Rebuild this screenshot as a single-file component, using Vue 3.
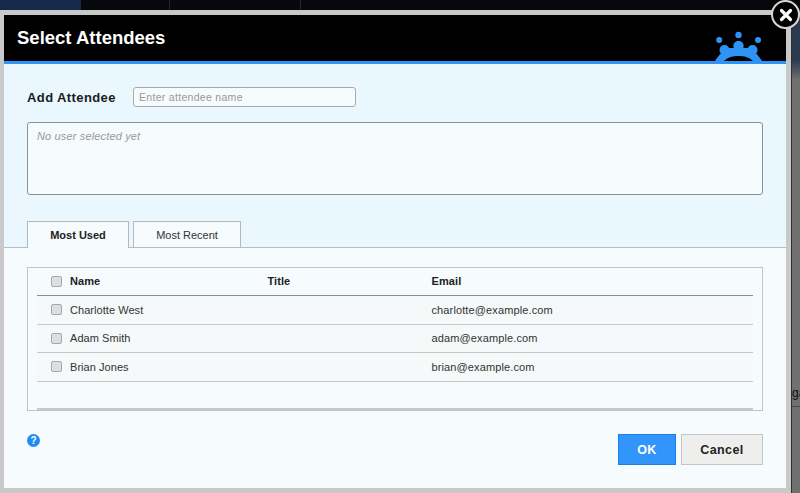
<script setup>
const rows = [
  { name: 'Charlotte West', email: 'charlotte@example.com' },
  { name: 'Adam Smith', email: 'adam@example.com' },
  { name: 'Brian Jones', email: 'brian@example.com' },
]
</script>

<template>
  <div class="page">
    <div class="topstrip">
      <i class="navy"></i>
      <i class="seg"></i>
      <i class="seg"></i>
    </div>
    <div class="sidetext">ga</div>
    <div class="sideline"></div>
    <div class="modal">
      <header class="head">
        <h1>Select Attendees</h1>
        <svg class="logo" width="48" height="30" viewBox="0 0 48 30">
          <g fill="#2f93f5">
            <circle cx="23.5" cy="4" r="3.2" />
            <circle cx="4.2" cy="9" r="3" />
            <circle cx="43" cy="9" r="3" />
            <circle cx="23.5" cy="15" r="5.2" />
            <circle cx="9.5" cy="19" r="5" />
            <circle cx="37.5" cy="19" r="5" />
            <path d="M0 30 C4 24 8 19 14 17 L33 17 C39 19 43 24 47 30 H38 C34 26 29 25 23.5 25 C18 25 13 26 9 30 Z" />
          </g>
        </svg>
      </header>

      <section class="upper">
        <div class="add-row">
          <label>Add Attendee</label>
          <div class="input">Enter attendee name</div>
        </div>
        <div class="selected">No user selected yet</div>
        <div class="tabs">
          <div class="tab active">Most Used</div>
          <div class="tab">Most Recent</div>
        </div>
      </section>

      <section class="lower">
        <div class="tablebox">
          <div class="row header">
            <span class="check"></span>
            <span class="name">Name</span>
            <span class="title">Title</span>
            <span class="email">Email</span>
          </div>
          <div v-for="r in rows" :key="r.email" class="row item">
            <span class="check"></span>
            <span class="name">{{ r.name }}</span>
            <span class="title"></span>
            <span class="email">{{ r.email }}</span>
          </div>
          <div class="tail"></div>
        </div>
        <div class="foot">
          <span class="help">?</span>
          <div class="buttons">
            <button class="ok">OK</button>
            <button class="cancel">Cancel</button>
          </div>
        </div>
      </section>
    </div>
    <div class="close">
      <svg width="16" height="16" viewBox="0 0 16 16">
        <path d="M3.5 3.5 L12.5 12.5 M12.5 3.5 L3.5 12.5" stroke="#fff" stroke-width="3.2" stroke-linecap="round" />
      </svg>
    </div>
  </div>
</template>

<style>
html, body { margin: 0; padding: 0; background: #6c6c6c; }
</style>

<style scoped>
.page {
  position: relative;
  width: 800px;
  height: 493px;
  overflow: hidden;
  background: linear-gradient(#2c3a50 0, #2c3a50 60px, #707070 80px);
  font-family: "Liberation Sans", Arial, sans-serif;
  color: #222;
}
.topstrip {
  height: 10px;
  background: #06080c;
  display: flex;
}
.navy {
  display: block;
  width: 81px;
  background: #16294a;
}
.seg {
  display: block;
  width: 88px;
  border-right: 1px solid #23262b;
}
.seg + .seg { width: 130px; }
.sidetext {
  position: absolute;
  left: 792px;
  top: 386px;
  font-size: 12px;
  color: #111;
}
.sideline {
  position: absolute;
  left: 792px;
  top: 406px;
  width: 8px;
  height: 1px;
  background: #4c4c4c;
}
.modal {
  width: 782px;
  height: 473px;
  border: 4px solid #c9c9c9;
  border-top-width: 5px;
  border-bottom-width: 5px;
  border-right-width: 5px;
  box-shadow: 1px 0 0 #2f2f2f;
  display: flex;
  flex-direction: column;
}
.head {
  height: 46px;
  background: #000;
  border-bottom: 3px solid #2f93f5;
  display: flex;
  align-items: flex-end;
  justify-content: space-between;
  padding: 0 23px 0 13px;
  flex: none;
}
.head h1 {
  margin: 0;
  align-self: flex-start;
  padding-top: 12px;
  font-size: 18.5px;
  line-height: 21px;
  font-weight: 700;
  color: #fff;
}
.logo {
  display: block;
}
.upper {
  flex: none;
  height: 184px;
  box-sizing: border-box;
  padding: 23px 23px 0;
  background-color: #f4fbfe;
  background-image: conic-gradient(#dff4fc 25%, transparent 0 50%, #dff4fc 0 75%, transparent 0);
  background-size: 2px 2px;
  border-bottom: 1px solid #b9bdbf;
  display: flex;
  flex-direction: column;
}
.add-row {
  display: flex;
  align-items: center;
  height: 20px;
}
.add-row label {
  width: 106px;
  font-size: 13px;
  font-weight: 700;
  letter-spacing: 0.4px;
  color: #1c1c1c;
}
.input {
  width: 216px;
  height: 18px;
  border: 1px solid #a9a9a9;
  border-radius: 3px;
  background: #f6fbfe;
  font-size: 10.5px;
  line-height: 19px;
  padding: 0 0 0 5px;
  color: #999;
  letter-spacing: 0.3px;
}
.selected {
  margin-top: 15px;
  padding: 7px 9px 0;
  height: 65px;
  width: 716px;
  border: 1px solid #8c8f91;
  border-radius: 3px;
  background: #f6fbfe;
  font-size: 11px;
  line-height: 13px;
  font-style: italic;
  letter-spacing: 0.15px;
  color: #999;
}
.tabs {
  margin-top: 26px;
  display: flex;
  gap: 4px;
  height: 26px;
}
.tab {
  box-sizing: border-box;
  width: 108px;
  height: 26px;
  border: 1px solid #b4b8ba;
  border-bottom: none;
  background: #f6fbfe;
  font-size: 11px;
  line-height: 27px;
  text-align: center;
  color: #333;
}
.tab.active {
  width: 102px;
  height: 27px;
  font-weight: 700;
  color: #222;
  position: relative;
  z-index: 1;
}
.lower {
  flex: 1;
  background: #f6fbfe;
  padding: 19px 23px 0;
  display: flex;
  flex-direction: column;
  min-height: 0;
}
.tablebox {
  box-sizing: border-box;
  width: 736px;
  height: 144px;
  border: 1px solid #c0c4c6;
  padding: 0 9px;
  flex: none;
}
.row {
  display: flex;
  align-items: center;
  height: 28px;
  font-size: 11px;
  letter-spacing: 0.05px;
  box-sizing: border-box;
  padding-left: 14px;
  color: #333;
}
.row.header {
  border-bottom: 1px solid #8c8f91;
  font-weight: 700;
  color: #222;
}
.row.header .name,
.row.header .title,
.row.header .email {
  padding-bottom: 2px;
}
.row.item {
  height: 28.6px;
  border-bottom: 1px solid #c6c8c8;
  background-color: #f5f9f9;
  background-image: radial-gradient(#e6e8e4 0.6px, transparent 0.7px);
  background-size: 4px 4px;
}
.check {
  box-sizing: border-box;
  width: 11px;
  height: 11px;
  border: 1px solid #a8a8a8;
  border-radius: 2px;
  background: #dcdee0;
  margin-right: 8px;
  flex: none;
}
.name { width: 197.5px; flex: none; }
.title { width: 164px; flex: none; }
.email { flex: 1; letter-spacing: 0.12px; }
.tail {
  height: 28.2px;
  box-sizing: border-box;
  border-bottom: 2px solid #c8c8c8;
}
.foot {
  position: relative;
  display: flex;
  justify-content: flex-end;
  align-items: flex-start;
  padding-top: 23px;
}
.help {
  position: absolute;
  left: 0;
  top: 23px;
  width: 13px;
  height: 13px;
  border-radius: 50%;
  background: #1f8cf0;
  color: #fff;
  font-size: 10px;
  line-height: 13px;
  font-weight: 700;
  text-align: center;
}
.buttons { display: flex; gap: 5px; }
button {
  box-sizing: border-box;
  height: 31px;
  font-family: "Liberation Sans", Arial, sans-serif;
  font-size: 12.5px;
  font-weight: 700;
  letter-spacing: 0.4px;
  padding: 0;
}
.ok {
  width: 58px;
  background: #3295fb;
  border: 1px solid #1b7fe6;
  color: #fff;
}
.cancel {
  width: 82px;
  background: #eeeeec;
  border: 1px solid #c4c4c8;
  color: #222;
}
.close {
  position: absolute;
  left: 771px;
  top: 0;
  width: 29px;
  height: 29px;
  box-sizing: border-box;
  border: 2px solid #d8d8d8;
  border-radius: 50%;
  background: #000;
  display: flex;
  align-items: center;
  justify-content: center;
}
</style>
